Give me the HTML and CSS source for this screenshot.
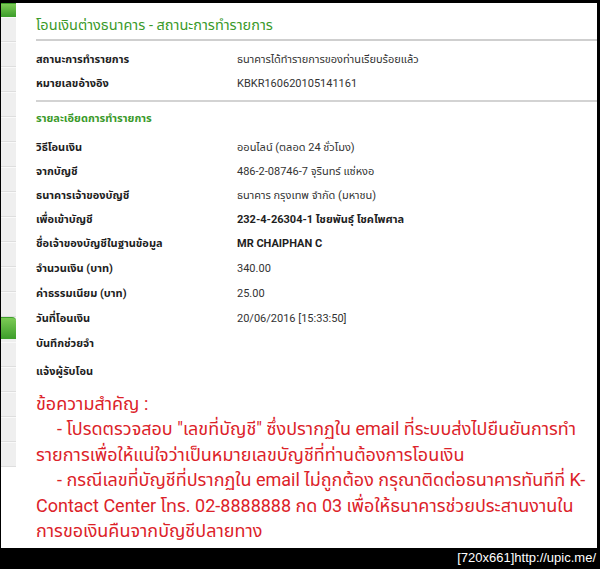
FILE: index.html
```html
<!DOCTYPE html>
<html lang="th">
<head>
<meta charset="utf-8">
<link rel="stylesheet" href="styles.css">
</head>
<body>
<div class="screen">
  <div class="topbar"></div>
  <div class="middle">
    <aside class="sidebar">
      <div class="tab tab-green tab-first"></div>
      <div class="tab"></div><div class="tab"></div><div class="tab"></div><div class="tab"></div>
      <div class="tab"></div><div class="tab"></div><div class="tab"></div><div class="tab"></div>
      <div class="tab"></div><div class="tab"></div><div class="tab"></div><div class="tab"></div>
      <div class="tab tab-green tab-active"></div>
      <div class="tab"></div><div class="tab"></div><div class="tab"></div><div class="tab"></div><div class="tab"></div>
    </aside>
    <main class="content">
      <h1 class="title">โอนเงินต่างธนาคาร - สถานะการทำรายการ</h1>
      <section class="block block-status">
        <div class="row"><span class="label">สถานะการทำรายการ</span><span class="value">ธนาคารได้ทำรายการของท่านเรียบร้อยแล้ว</span></div>
        <div class="row"><span class="label">หมายเลขอ้างอิง</span><span class="value">KBKR160620105141161</span></div>
      </section>
      <section class="block block-detail">
        <h2 class="subtitle">รายละเอียดการทำรายการ</h2>
        <div class="row"><span class="label">วิธีโอนเงิน</span><span class="value">ออนไลน์ (ตลอด 24 ชั่วโมง)</span></div>
        <div class="row"><span class="label">จากบัญชี</span><span class="value">486-2-08746-7 จุรินทร์ แซ่หงอ</span></div>
        <div class="row"><span class="label">ธนาคารเจ้าของบัญชี</span><span class="value">ธนาคาร กรุงเทพ จำกัด (มหาชน)</span></div>
        <div class="row"><span class="label">เพื่อเข้าบัญชี</span><span class="value value-bold">232-4-26304-1 ไชยพันธุ์ โชคไพศาล</span></div>
        <div class="row"><span class="label">ชื่อเจ้าของบัญชีในฐานข้อมูล</span><span class="value value-bold">MR CHAIPHAN C</span></div>
        <div class="row row-tall"><span class="label">จำนวนเงิน (บาท)</span><span class="value">340.00</span></div>
        <div class="row row-tall"><span class="label">ค่าธรรมเนียม (บาท)</span><span class="value">25.00</span></div>
        <div class="row row-tall"><span class="label">วันที่โอนเงิน</span><span class="value">20/06/2016 [15:33:50]</span></div>
        <div class="row row-tall"><span class="label">บันทึกช่วยจำ</span><span class="value"></span></div>
        <div class="row row-last"><span class="label">แจ้งผู้รับโอน</span><span class="value"></span></div>
      </section>
      <section class="notice">
        <p class="notice-head">ข้อความสำคัญ :</p>
        <p class="notice-text"><span class="indent">- โปรดตรวจสอบ "เลขที่บัญชี" ซึ่งปรากฏใน email ที่ระบบส่งไปยืนยันการทำ</span><br>รายการเพื่อให้แน่ใจว่าเป็นหมายเลขบัญชีที่ท่านต้องการโอนเงิน<br><span class="indent">- กรณีเลขที่บัญชีที่ปรากฏใน email ไม่ถูกต้อง กรุณาติดต่อธนาคารทันทีที่ K-</span><br>Contact Center โทร. 02-8888888 กด 03 เพื่อให้ธนาคารช่วยประสานงานใน<br>การขอเงินคืนจากบัญชีปลายทาง</p>
      </section>
    </main>
  </div>
  <footer class="watermark">[720x661]http://upic.me/</footer>
</div>
</body>
</html>
```
FILE: styles.css
```css
* { box-sizing: border-box; }
html, body { margin: 0; padding: 0; background: #000; }
body { width: 600px; height: 569px; overflow: hidden; font-family: Roboto, "Noto Sans", "Noto Sans Thai", sans-serif; }

.screen { width: 600px; height: 569px; display: flex; flex-direction: column; background: #000; }
.topbar { height: 3px; background: #000; flex: none; }
.middle { height: 545px; flex: none; display: flex; margin-right: 3px; margin-left: 1px; background: #fff; }

.sidebar { width: 15px; flex: none; height: 464px; background: #efefef; overflow: hidden; display: flex; flex-direction: column; }
.tab { height: 25px; flex: none; border-bottom: 1px solid #dedede; border-top: 1px solid #f9f9f9; }
.tab-first { height: 14px; }
.tab-green { background: linear-gradient(#7ccb55, #3f9f2c); border-color: #3f9f2c; }
.tab-active { border-top-right-radius: 4px; height: 22px; margin-bottom: 3px; }

.content { flex: 1; padding-left: 20px; display: flex; flex-direction: column; }

.title { margin: 0; height: 38px; padding-top: 13px; font-size: 14.5px; line-height: 19px; font-weight: normal; color: #3a9a2a; border-bottom: 2px solid #cfcfcf; }

.block { display: flex; flex-direction: column; }
.block-status { padding: 6px 0 5px; border-bottom: 2px solid #d3d3d3; }
.row { display: flex; height: 24px; align-items: center; font-size: 11px; }
.row-tall { height: 25px; }
.row-last { height: 30px; }
.label { width: 201px; flex: none; font-weight: bold; color: #1e1e1e; }
.value { color: #333; }
.value-bold { font-weight: bold; color: #1e1e1e; }

.block-detail { padding-top: 8px; }
.subtitle { margin: 0 0 7px; height: 18px; line-height: 18px; font-size: 11px; font-weight: bold; color: #3a9a2a; }
.block-detail .row:nth-child(7) { margin-top: 1px; }

.notice { color: #dc2229; font-size: 18px; line-height: 25.4px; padding-top: 5px; white-space: nowrap; }
.notice p { margin: 0; }
.indent { padding-left: 21px; }

.watermark { height: 21px; flex: none; color: #fff; font-family: "Liberation Sans", sans-serif; font-size: 13px; line-height: 20px; text-align: right; padding-right: 4px; background: #000; }
```
